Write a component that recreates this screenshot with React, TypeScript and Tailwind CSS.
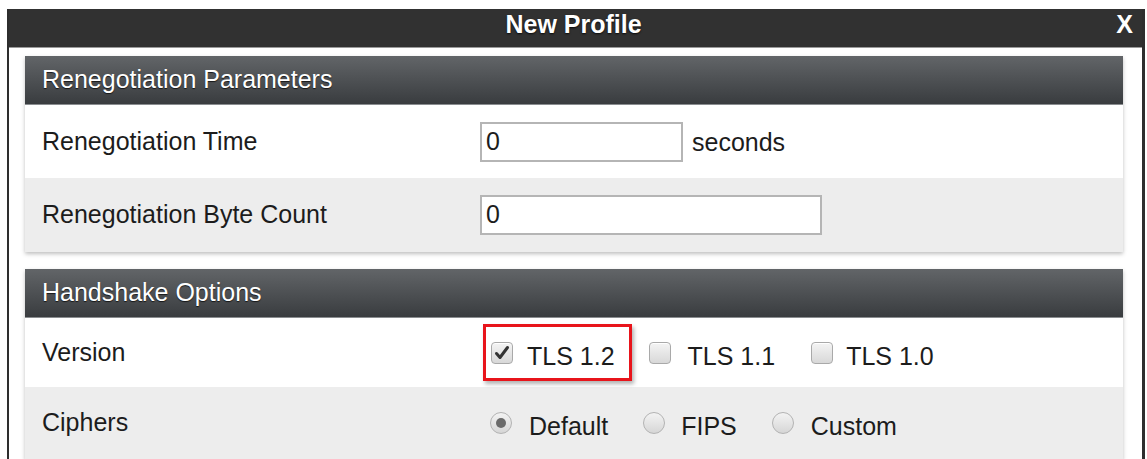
import React from "react";

const font = "font-['Liberation_Sans',Arial,sans-serif]";

function SectionHeader({ title }: { title: string }) {
  return (
    <div className="h-[49px] flex items-center pl-[17px] bg-[linear-gradient(#626568,#393c3f)] border-b border-[#8a8d90] text-white text-[25px] [text-shadow:0_1px_1px_rgba(0,0,0,0.7)]">
      {title}
    </div>
  );
}

function Row({
  label,
  shaded,
  height,
  children,
}: {
  label: string;
  shaded?: boolean;
  height: string;
  children?: React.ReactNode;
}) {
  return (
    <div className={`flex items-center ${height} ${shaded ? "bg-[#ededed]" : "bg-white"}`}>
      <div className="w-[455px] pl-[17px] text-[25px] text-[#1c1c1c]">{label}</div>
      <div className="flex items-center">{children}</div>
    </div>
  );
}

function TextInput({ width }: { width: string }) {
  return (
    <div className={`${width} h-[40px] border-2 border-[#b5b5b5] bg-white flex items-center pl-[4px] text-[25px] text-[#1c1c1c]`}>
      0
    </div>
  );
}

function Checkbox({ checked }: { checked?: boolean }) {
  return (
    <span className="w-[22px] h-[22px] rounded-[4px] border border-[#a9a9a9] bg-[linear-gradient(#f4f4f4,#d8d8d8)] flex items-center justify-center shadow-[inset_0_1px_0_#fff]">
      {checked && (
        <svg width="18" height="18" viewBox="0 0 18 18">
          <path d="M3.5 9.5 L7 13.5 L14.5 3.5" fill="none" stroke="#333" strokeWidth="3" strokeLinejoin="round" strokeLinecap="round" />
        </svg>
      )}
    </span>
  );
}

function Radio({ checked }: { checked?: boolean }) {
  return (
    <span className="w-[22px] h-[22px] rounded-full border border-[#b3b3b3] bg-[linear-gradient(#f3f3f3,#d6d6d6)] flex items-center justify-center">
      {checked && <span className="w-[10px] h-[10px] rounded-full bg-[#6a6a6a]" />}
    </span>
  );
}

function Option({ children, ml }: { children: React.ReactNode; ml: string }) {
  return <span className={`${ml} pt-[8px] text-[25px] text-[#1c1c1c]`}>{children}</span>;
}

export default function App() {
  return (
    <div className={`w-[1147px] h-[459px] overflow-hidden bg-white pt-[9px] pl-[7px] pr-[2px] ${font}`}>
      <div className="h-[460px] border-l-2 border-r-[3px] border-[#2e2e2e] flex flex-col">
        {/* dialog title bar */}
        <div className="relative h-[39px] shrink-0 bg-[#313131] border-b border-[#9a9a9a] flex items-center justify-center pb-[6px]">
          <span className="text-white font-bold text-[25px] [text-shadow:0_1px_2px_rgba(0,0,0,0.8)] ml-[-4px]">
            New Profile
          </span>
          <span className="absolute right-[9px] top-[-3px] text-white font-bold text-[25px]">X</span>
        </div>

        <div className="flex-1 bg-white pl-[16px] pr-[19px] pt-[8px] flex flex-col gap-[17px]">
          <div className="shadow-[0_2px_4px_rgba(0,0,0,0.25)]">
            <SectionHeader title="Renegotiation Parameters" />
            <Row label="Renegotiation Time" height="h-[73px]">
              <TextInput width="w-[203px]" />
              <span className="ml-[9px] pt-[3px] text-[25px] text-[#1c1c1c]">seconds</span>
            </Row>
            <Row label="Renegotiation Byte Count" shaded height="h-[74px]">
              <TextInput width="w-[342px]" />
            </Row>
          </div>

          <div className="shadow-[0_2px_4px_rgba(0,0,0,0.25)]">
            <SectionHeader title="Handshake Options" />
            <Row label="Version" height="h-[69px]">
              <div className="relative flex items-center h-[57px] ml-[3px] pl-[5px] pr-[14px] border-[3px] border-[#e8141b] shadow-[2px_3px_4px_rgba(0,0,0,0.3)]">
                <Checkbox checked />
                <Option ml="ml-[14px]">TLS 1.2</Option>
              </div>
              <span className="ml-[17px]"><Checkbox /></span>
              <Option ml="ml-[17px]">TLS 1.1</Option>
              <span className="ml-[36px]"><Checkbox /></span>
              <Option ml="ml-[13px]">TLS 1.0</Option>
            </Row>
            <Row label="Ciphers" shaded height="h-[72px]">
              <span className="ml-[10px]"><Radio checked /></span>
              <Option ml="ml-[17px]">Default</Option>
              <span className="ml-[35px]"><Radio /></span>
              <Option ml="ml-[16px]">FIPS</Option>
              <span className="ml-[35px]"><Radio /></span>
              <Option ml="ml-[17px]">Custom</Option>
            </Row>
          </div>
        </div>
      </div>
    </div>
  );
}
